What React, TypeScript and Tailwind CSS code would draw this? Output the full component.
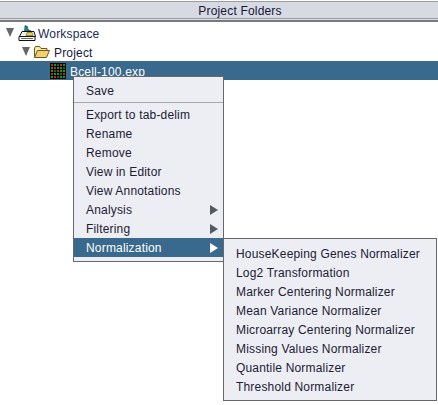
import React from "react";

const mainItems = ["Export to tab-delim", "Rename", "Remove", "View in Editor", "View Annotations"];
const subItems = [
  "HouseKeeping Genes Normalizer",
  "Log2 Transformation",
  "Marker Centering Normalizer",
  "Mean Variance Normalizer",
  "Microarray Centering Normalizer",
  "Missing Values Normalizer",
  "Quantile Normalizer",
  "Threshold Normalizer",
];
const cells = ["rgkrg", "grggk", "gkrgg", "rggkr", "grkgg"];
const cellColor: Record<string, string> = { r: "#e8170f", g: "#12a012", k: "#0c6a0c" };

const Expander = () => (
  <svg width="8" height="9" viewBox="0 0 8 9" className="shrink-0">
    <path d="M0 0H8L4 9Z" fill="#62676b" />
  </svg>
);

const WorkspaceIcon = () => (
  <svg width="18" height="16" viewBox="0 0 18 16" className="shrink-0">
    <path d="M7 0.5L9.5 1.5L10 4.5L13 6H6.5Z" fill="#1c8a96" stroke="#0c4a50" strokeWidth="0.6" />
    <path d="M4 6.5H16L17.5 11.5H1.5Z" fill="#f2f2f2" stroke="#111" />
    <path d="M1 11.5H17V15.5H1Z" fill="#fff" stroke="#111" />
    <path d="M9 7.5H14L15 10.5H8Z" fill="#e6d24a" stroke="#6a5a10" strokeWidth="0.6" />
    <path d="M3 13.5H15" stroke="#666" />
  </svg>
);

const FolderIcon = () => (
  <svg width="16" height="12" viewBox="0 0 16 12" className="shrink-0">
    <path d="M0.5 11V2L1.5 0.5H5.5L7 2.5H13V4" fill="#f8e8a8" stroke="#6b5a20" />
    <path d="M0.5 11.5L3.5 4.5H15.5L12.5 11.5Z" fill="#f2cf70" stroke="#6b5a20" />
  </svg>
);

const HeatmapIcon = () => (
  <svg width="16" height="16" viewBox="0 0 16 16" className="shrink-0">
    <rect width="16" height="16" fill="#000" />
    {cells.map((row, y) =>
      row.split("").map((c, x) => (
        <rect key={`${x}-${y}`} x={1 + x * 3} y={1 + y * 3} width="2" height="2" fill={cellColor[c]} />
      ))
    )}
  </svg>
);

const Label = ({ children, className = "" }: { children: React.ReactNode; className?: string }) => (
  <span className={`tracking-[0.18px] ${className}`}>{children}</span>
);

const MenuRow = ({ label, arrow, active }: { label: string; arrow?: boolean; active?: boolean }) => (
  <div
    className={`flex items-center justify-between h-[19px] pl-3 pr-[5px] ${
      active ? "bg-[#39698c] text-white" : "text-[#1d2033]"
    }`}
  >
    <Label className="pt-[2px]">{label}</Label>
    {arrow && (
      <svg width="8" height="10" viewBox="0 0 8 10">
        <path d="M0 0L8 5L0 10Z" fill={active ? "#ffffff" : "#555a60"} />
      </svg>
    )}
  </div>
);

export default function App() {
  return (
    <div className="relative w-[438px] h-[405px] overflow-hidden bg-white text-[12px] leading-[19px] font-['Liberation_Sans',Arial,sans-serif] text-[#16163a]">
      <div className="mt-px h-[18px] bg-[#d8dae3] border-y border-y-[#9a9ca0] flex items-center justify-center pl-[42px] text-[#16163a]">
        <Label className="pt-[2px]">Project Folders</Label>
      </div>
      <div className="h-[3px] bg-[#dcdde0] border-b-2 border-b-[#77797c]" />

      <div className="flex flex-col pt-px">
        <div className="flex items-center h-[19px] pl-[6px]">
          <Expander />
          <span className="ml-[4px] flex">
            <WorkspaceIcon />
          </span>
          <Label className="ml-[2px] pt-[4px] text-[#1a2a55]">Workspace</Label>
        </div>
        <div className="flex items-center h-[19px] pl-[22px]">
          <Expander />
          <span className="ml-[4px] flex">
            <FolderIcon />
          </span>
          <Label className="ml-[4px] pt-[4px]">Project</Label>
        </div>
        <div className="flex items-center h-[19px] pl-[50px] bg-[#39698c] text-white">
          <HeatmapIcon />
          <Label className="ml-[4px] pt-[4px]">Bcell-100.exp</Label>
        </div>
      </div>

      <div className="absolute left-[73px] top-[76px] w-[151px] bg-[#eceef3] border border-[#66686c] py-1">
        <MenuRow label="Save" />
        <div className="h-[5px] flex items-center">
          <div className="w-full h-px bg-[#a5a7ab]" />
        </div>
        {mainItems.map((item) => (
          <MenuRow key={item} label={item} />
        ))}
        <MenuRow label="Analysis" arrow />
        <MenuRow label="Filtering" arrow />
        <MenuRow label="Normalization" arrow active />
      </div>

      <div className="absolute left-[223px] top-[238px] w-[214px] bg-[#eceef3] border border-[#66686c] pt-[5px] pb-1">
        {subItems.map((item) => (
          <MenuRow key={item} label={item} />
        ))}
      </div>
    </div>
  );
}
